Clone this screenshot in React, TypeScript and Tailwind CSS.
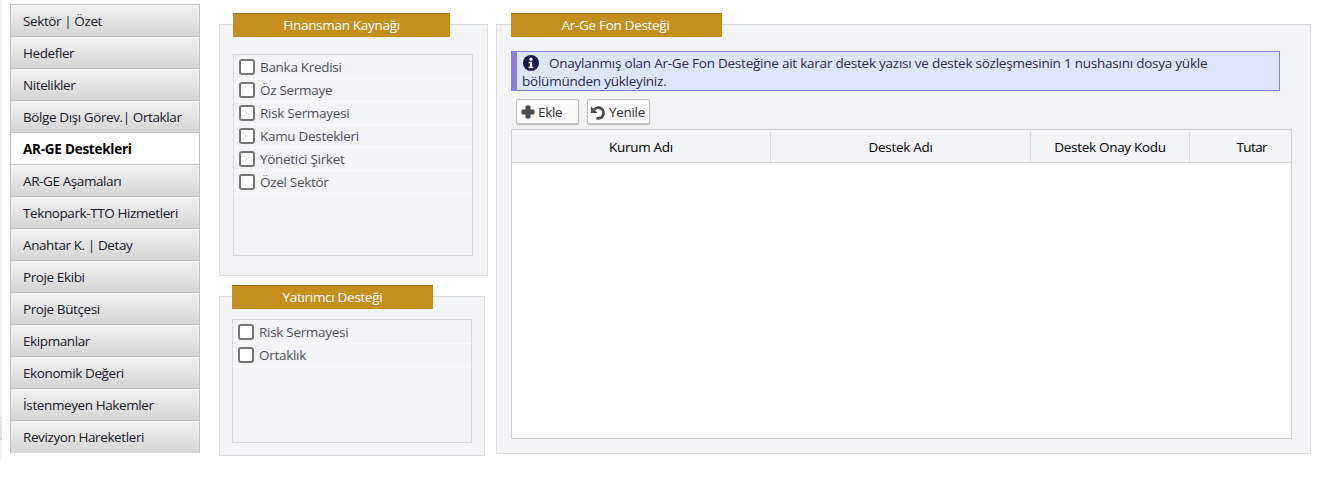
import React from 'react';

const menuItems = [
  'Sektör | Özet',
  'Hedefler',
  'Nitelikler',
  'Bölge Dışı Görev.| Ortaklar',
  'AR-GE Destekleri',
  'AR-GE Aşamaları',
  'Teknopark-TTO Hizmetleri',
  'Anahtar K. | Detay',
  'Proje Ekibi',
  'Proje Bütçesi',
  'Ekipmanlar',
  'Ekonomik Değeri',
  'İstenmeyen Hakemler',
  'Revizyon Hareketleri',
];

const finance = ['Banka Kredisi', 'Öz Sermaye', 'Risk Sermayesi', 'Kamu Destekleri', 'Yönetici Şirket', 'Özel Sektör'];
const investor = ['Risk Sermayesi', 'Ortaklık'];

const PanelTitle = ({ text, className }: { text: string; className: string }) => (
  <div className={`h-6 bg-[#c58f1f] border-t border-[#9a6c14] text-white text-[13.5px] leading-[23px] text-center ${className}`}>
    {text}
  </div>
);

const CheckList = ({ items, className }: { items: string[]; className: string }) => (
  <div className={`border border-[#d8dadc] pt-px ${className}`}>
    {items.map((item) => (
      <label key={item} className="flex items-center h-[23px] pl-[5px] border-b border-[#fafbfc] text-[13.5px] text-[#50505a]">
        <span className="w-4 h-4 rounded-[3px] border-2 border-[#767676] bg-white mr-[5px] shrink-0" />
        {item}
      </label>
    ))}
  </div>
);

const ToolButton = ({ icon, text, className }: { icon: React.ReactNode; text: string; className: string }) => (
  <button className={`h-[25px] pt-px flex items-center border border-[#c4c4c4] rounded-[2px] bg-[#fafafa] shadow-[0_1px_1px_rgba(0,0,0,0.25)] text-[13.5px] text-[#333] ${className}`}>
    {icon}
    {text}
  </button>
);

export default function App() {
  return (
    <div className="w-[1320px] h-[479px] bg-white overflow-hidden flex font-['Open_Sans','Noto_Sans',sans-serif] tracking-[-0.3px]">
      <div className="w-[2px] h-[460px] bg-[#f0f0f0] shrink-0 flex flex-col">
        <div className="h-px mt-[417px] bg-[#d4d4d4]" />
        <div className="h-[22px] bg-[#e6e6e6] border-b border-[#d4d4d4]" />
      </div>

      {/* Side menu */}
      <div className="w-[190px] h-[449px] ml-2 mt-1 border border-[#c2c2c2] flex flex-col shrink-0 tracking-[-0.4px]">
        {menuItems.map((item) =>
          item === 'AR-GE Destekleri' ? (
            <div key={item} className="h-8 shrink-0 px-3 pt-[2px] bg-white border-b border-[#c2c2c2] flex items-center text-[13.5px] font-bold text-black tracking-[-0.25px]">
              {item}
            </div>
          ) : (
            <div key={item} className="h-8 shrink-0 px-3 pt-[2px] last:pt-0 bg-gradient-to-b from-[#f1f1f1] to-[#d5d5d5] border-b border-[#c2c2c2] last:border-b-0 flex items-center text-[13.5px] text-[#1a1a2a]">
              {item}
            </div>
          ),
        )}
      </div>

      {/* Checkbox panels */}
      <div className="w-[269px] ml-[19px] mt-[13px] shrink-0">
        <PanelTitle text="Finansman Kaynağı" className="w-[217px] ml-[14px] relative" />
        <div className="w-[269px] h-[252px] -mt-[13px] bg-[#f3f4f6] border border-[#dcdee0] pt-[29px] pl-[13px]">
          <CheckList items={finance} className="w-[240px] h-[202px]" />
        </div>
        <PanelTitle text="Yatırımcı Desteği" className="w-[201px] ml-[13px] mt-[9px] relative" />
        <div className="w-[266px] h-[160px] -mt-[13px] bg-[#f3f4f6] border border-[#dcdee0] pt-[22px] pl-[12px]">
          <CheckList items={investor} className="w-[240px] h-[124px]" />
        </div>
      </div>

      {/* Ar-Ge fund panel */}
      <div className="w-[815px] ml-2 mt-[13px] shrink-0">
        <PanelTitle text="Ar-Ge Fon Desteği" className="w-[211px] ml-[15px] pr-[2px] relative" />
        <div className="w-[815px] h-[430px] -mt-[13px] bg-[#f3f4f6] border border-[#dcdee0] pt-[26px] pl-[14px]">
          <div className="w-[769px] h-[40px] bg-[#dce6fb] border border-[#8a80d8] border-l-[6px] text-[13.5px] leading-[18px] text-[#2b2b55] pt-[2px] tracking-[-0.235px]">
            <div className="flex items-center">
              <svg viewBox="0 0 16 16" className="w-4 h-4 mr-[10px] ml-[6px] shrink-0">
                <circle cx="8" cy="8" r="8" fill="#17174f" />
                <circle cx="8" cy="4.2" r="1.6" fill="#fff" />
                <path d="M5.6 6.8h3.6v5h1.2v1.5H5.6v-1.5h1.2V8.3H5.6z" fill="#fff" />
              </svg>
              Onaylanmış olan Ar-Ge Fon Desteğine ait karar destek yazısı ve destek sözleşmesinin 1 nushasını dosya yükle
            </div>
            <div className="pl-[5px]">bölümünden yükleyiniz.</div>
          </div>

          <div className="flex gap-2 mt-2 ml-[5px]">
            <ToolButton
              className="w-[63px] pl-[4px]"
              text="Ekle"
              icon={
                <svg viewBox="0 0 14 14" className="w-[14px] h-[14px] mr-[3px]">
                  <path d="M5 1h4v4h4v4H9v4H5V9H1V5h4z" fill="#4a4a4a" stroke="#4a4a4a" strokeLinejoin="round" />
                </svg>
              }
            />
            <ToolButton
              className="w-[63px] pl-[2px]"
              text="Yenile"
              icon={
                <svg viewBox="0 0 16 16" className="w-[17px] h-[17px] mr-[2px]" fill="none">
                  <path d="M6 13.2A5 5 0 1 0 4 5.2" stroke="#4a4a4a" strokeWidth="2.6" />
                  <path d="M0.8 2.2v6.3h6.3z" fill="#4a4a4a" />
                </svg>
              }
            />
          </div>

          <div className="w-[781px] h-[310px] mt-[5px] border border-[#cfd1d4] bg-white flex flex-col">
            <div className="h-[33px] pt-[2px] bg-[#f3f4f6] border-b border-[#d5d7da] flex text-[13.5px] text-black shrink-0">
              <div className="w-[259px] border-r border-[#d5d7da] flex items-center justify-center">Kurum Adı</div>
              <div className="w-[260px] border-r border-[#d5d7da] flex items-center justify-center">Destek Adı</div>
              <div className="w-[159px] border-r border-[#d5d7da] flex items-center justify-center">Destek Onay Kodu</div>
              <div className="flex-1 flex items-center justify-end pr-[24px] tracking-[-0.6px]">Tutar</div>
            </div>
          </div>
        </div>
      </div>
    </div>
  );
}
